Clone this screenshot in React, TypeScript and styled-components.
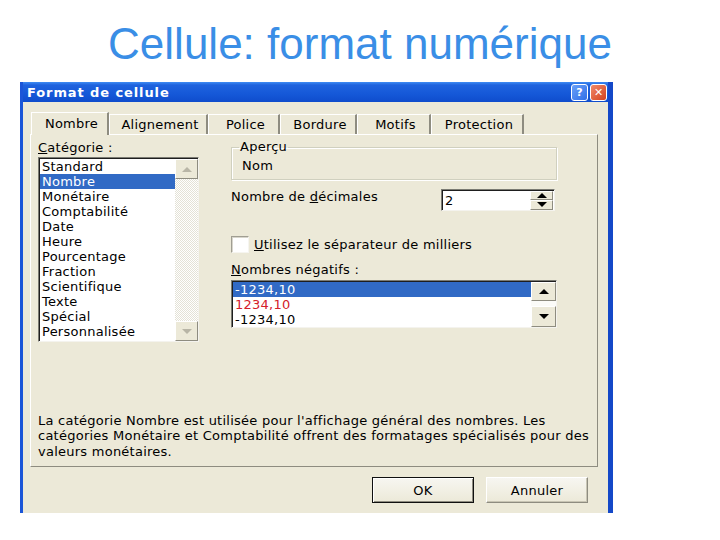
import React from 'react';
import styled, { createGlobalStyle, css } from 'styled-components';

const GlobalStyle = createGlobalStyle`
    html, body {
        margin: 0;
        padding: 0;
        background: #ffffff;
    }
    body {
        font-family: 'DejaVu Sans', 'Liberation Sans', sans-serif;
        font-size: 13px;
        letter-spacing: 0.25px;
        color: #000;
    }
`;

const categories = [
    'Standard',
    'Nombre',
    'Monétaire',
    'Comptabilité',
    'Date',
    'Heure',
    'Pourcentage',
    'Fraction',
    'Scientifique',
    'Texte',
    'Spécial',
    'Personnalisée',
];

const negatives = [
    { label: '-1234,10', red: false },
    { label: '1234,10', red: true },
    { label: '-1234,10', red: false },
];

const tabs = [
    { label: 'Nombre', w: 78 },
    { label: 'Alignement', w: 99 },
    { label: 'Police', w: 72 },
    { label: 'Bordure', w: 77 },
    { label: 'Motifs', w: 74 },
    { label: 'Protection', w: 93 },
];

export default function App() {
    return (
        <>
            <GlobalStyle />
            <Page>
                <Heading>Cellule: format numérique</Heading>
                <Dialog>
                    <TitleBar>
                        <TitleText>Format de cellule</TitleText>
                        <TitleButtons>
                            <CaptionButton $kind="help">?</CaptionButton>
                            <CaptionButton $kind="close">✕</CaptionButton>
                        </TitleButtons>
                    </TitleBar>
                    <Client>
                        <TabRow>
                            {tabs.map((t, i) => (
                                <Tab key={t.label} $w={t.w} $active={i === 0}>
                                    {t.label}
                                </Tab>
                            ))}
                        </TabRow>
                        <Panel>
                            <Columns>
                                <Column>
                                    <Label>
                                        <u>C</u>atégorie :
                                    </Label>
                                    <CatList>
                                        <Items>
                                            {categories.map((c, i) => (
                                                <Item key={c} $selected={i === 1}>
                                                    {c}
                                                </Item>
                                            ))}
                                        </Items>
                                        <ScrollBar $width={23}>
                                            <ScrollButton $h={20}>
                                                <Arrow $dir="up" $disabled />
                                            </ScrollButton>
                                            <Track $checker />
                                            <ScrollButton $h={20}>
                                                <Arrow $dir="down" $disabled />
                                            </ScrollButton>
                                        </ScrollBar>
                                    </CatList>
                                </Column>
                                <Column>
                                    <GroupBox>
                                        <Legend>Aperçu</Legend>
                                        <Preview>Nom</Preview>
                                    </GroupBox>
                                    <DecimalRow>
                                        <Label>
                                            Nombre de <u>d</u>écimales
                                        </Label>
                                        <SpinBox>
                                            <SpinValue>2</SpinValue>
                                            <SpinButtons>
                                                <SpinButton>
                                                    <Arrow $dir="up" />
                                                </SpinButton>
                                                <SpinButton>
                                                    <Arrow $dir="down" />
                                                </SpinButton>
                                            </SpinButtons>
                                        </SpinBox>
                                    </DecimalRow>
                                    <CheckRow>
                                        <CheckBox />
                                        <Label>
                                            <u>U</u>tilisez le séparateur de milliers
                                        </Label>
                                    </CheckRow>
                                    <NegLabel>
                                        <u>N</u>ombres négatifs :
                                    </NegLabel>
                                    <NegList>
                                        <Items>
                                            {negatives.map((n, i) => (
                                                <Item key={i} $selected={i === 0} $red={n.red}>
                                                    {n.label}
                                                </Item>
                                            ))}
                                        </Items>
                                        <ScrollBar $width={25}>
                                            <ScrollButton $h={19}>
                                                <Arrow $dir="up" />
                                            </ScrollButton>
                                            <Track />
                                            <ScrollButton $h={21}>
                                                <Arrow $dir="down" />
                                            </ScrollButton>
                                        </ScrollBar>
                                    </NegList>
                                </Column>
                            </Columns>
                            <Description>
                                La catégorie Nombre est utilisée pour l'affichage général des nombres. Les
                                <br />
                                catégories Monétaire et Comptabilité offrent des formatages spécialisés pour des
                                <br />
                                valeurs monétaires.
                            </Description>
                        </Panel>
                        <ButtonRow>
                            <PushButton $default>OK</PushButton>
                            <PushButton>Annuler</PushButton>
                        </ButtonRow>
                    </Client>
                </Dialog>
            </Page>
        </>
    );
}

const Page = styled.div`
    width: 720px;
    height: 540px;
    overflow: hidden;
    background: #fff;
`;

const Heading = styled.h1`
    margin: 0;
    height: 82px;
    padding-top: 18px;
    box-sizing: border-box;
    text-align: center;
    font-family: 'Liberation Sans', Arial, sans-serif;
    font-weight: normal;
    font-size: 44px;
    letter-spacing: 0;
    line-height: 52px;
    color: #3a8ee6;
`;

const Dialog = styled.div`
    margin-left: 20px;
    width: 593px;
    height: 431px;
    box-sizing: border-box;
    border-left: 3px solid #1b56d8;
    border-right: 5px solid #1448c8;
    display: flex;
    flex-direction: column;
`;

const TitleBar = styled.div`
    height: 20px;
    display: flex;
    align-items: center;
    justify-content: space-between;
    padding: 0 1px 0 4px;
    background: linear-gradient(#3f8cf3 0, #1f63de 3px, #1558d8 12px, #0f4ccc 20px);
`;

const TitleText = styled.span`
    color: #fff;
    font-weight: bold;
    font-size: 13px;
    letter-spacing: 0.9px;
`;

const TitleButtons = styled.div`
    display: flex;
    gap: 2px;
`;

const CaptionButton = styled.div<{ $kind: 'help' | 'close' }>`
    width: 17px;
    height: 17px;
    box-sizing: border-box;
    border: 1px solid #fff;
    border-radius: 3px;
    display: flex;
    align-items: center;
    justify-content: center;
    color: #fff;
    font-weight: bold;
    font-size: 11px;
    letter-spacing: 0;
    line-height: 1;
    ${(p) =>
        p.$kind === 'help'
            ? css`
                  background: linear-gradient(135deg, #6aa1f8, #2f6ee8);
              `
            : css`
                  background: linear-gradient(135deg, #f08a6a, #d5421f);
              `}
`;

const Client = styled.div`
    flex: 1;
    background: #ece9d8;
    padding: 10px 10px 0 7px;
    display: flex;
    flex-direction: column;
`;

const TabRow = styled.div`
    display: flex;
    align-items: flex-end;
    height: 22px;
    padding-left: 1px;
    position: relative;
    z-index: 1;
`;

const Tab = styled.div<{ $w: number; $active?: boolean }>`
    width: ${(p) => p.$w}px;
    box-sizing: border-box;
    height: ${(p) => (p.$active ? 23 : 20)}px;
    margin-bottom: ${(p) => (p.$active ? -1 : 0)}px;
    padding: ${(p) => (p.$active ? '3px' : '2px')} 0 0 4px;
    text-align: center;
    background: #ece9d8;
    border-top: 1px solid #fff;
    border-left: 1px solid #fff;
    border-right: 2px solid #8e8c80;
    line-height: 16px;
`;

const Panel = styled.div`
    height: 333px;
    box-sizing: border-box;
    border: 1px solid;
    border-color: #fff #8e8c80 #8e8c80 #fff;
    padding: 5px 0 7px 7px;
    display: flex;
    flex-direction: column;
`;

const Columns = styled.div`
    display: grid;
    grid-template-columns: 161px 326px;
    column-gap: 32px;
`;

const Column = styled.div`
    display: flex;
    flex-direction: column;
`;

const Label = styled.span`
    line-height: 15px;
    white-space: nowrap;
`;

const sunken = css`
    box-sizing: border-box;
    background: #fff;
    border: 1px solid;
    border-color: #7b7b73 #f4f3ee #f4f3ee #7b7b73;
    box-shadow: inset 1px 1px 0 #1e1e1e;
`;

const CatList = styled.div`
    ${sunken};
    margin-top: 2px;
    width: 161px;
    height: 185px;
    display: flex;
    padding: 1px 0 0 1px;
`;

const Items = styled.div`
    flex: 1;
    display: flex;
    flex-direction: column;
`;

const Item = styled.div<{ $selected?: boolean; $red?: boolean }>`
    height: 15px;
    line-height: 16px;
    padding-left: 2px;
    white-space: nowrap;
    color: ${(p) => (p.$selected ? '#fff' : p.$red ? '#d4202a' : '#000')};
    background: ${(p) => (p.$selected ? '#316ac5' : 'transparent')};
`;

const ScrollBar = styled.div<{ $width: number }>`
    width: ${(p) => p.$width}px;
    display: flex;
    flex-direction: column;
`;

const ScrollButton = styled.div<{ $h: number }>`
    height: ${(p) => p.$h}px;
    box-sizing: border-box;
    background: #ece9d8;
    border: 1px solid;
    border-color: #fff #8e8c80 #8e8c80 #fff;
    display: flex;
    align-items: center;
    justify-content: center;
`;

const Track = styled.div<{ $checker?: boolean }>`
    flex: 1;
    background-color: #fbfbf8;
    ${(p) =>
        p.$checker &&
        css`
            background-image: repeating-conic-gradient(#ffffff 0 25%, #e4e2d6 0 50%);
            background-size: 2px 2px;
        `}
`;

const Arrow = styled.span<{ $dir: 'up' | 'down'; $disabled?: boolean }>`
    width: 0;
    height: 0;
    border-left: 5px solid transparent;
    border-right: 5px solid transparent;
    ${(p) =>
        p.$dir === 'up'
            ? css`
                  border-bottom: 5px solid ${p.$disabled ? '#b8b5a6' : '#000'};
              `
            : css`
                  border-top: 5px solid ${p.$disabled ? '#b8b5a6' : '#000'};
              `}
`;

const GroupBox = styled.fieldset`
    margin: 0;
    padding: 0 10px 5px 10px;
    border: 1px solid #d0d0bf;
    box-shadow: inset 1px 1px 0 #fff, 1px 1px 0 #fff;
    border-radius: 0;
    height: 40px;
    box-sizing: border-box;
`;

const Legend = styled.legend`
    padding: 0 1px;
    margin-left: -3px;
    line-height: 14px;
`;

const Preview = styled.div`
    margin-top: 4px;
    line-height: 15px;
`;

const DecimalRow = styled.div`
    display: flex;
    align-items: flex-start;
    margin-top: 9px;
`;

const SpinBox = styled.div`
    ${sunken};
    margin-left: auto;
    margin-right: 2px;
    width: 114px;
    height: 22px;
    display: flex;
    align-items: center;
    padding: 1px 1px 1px 3px;
`;

const SpinValue = styled.span`
    flex: 1;
    line-height: 16px;
    padding-top: 2px;
`;

const SpinButtons = styled.div`
    width: 23px;
    height: 19px;
    display: flex;
    flex-direction: column;
`;

const SpinButton = styled.div`
    flex: 1;
    box-sizing: border-box;
    background: #ece9d8;
    border: 1px solid;
    border-color: #fff #8e8c80 #8e8c80 #fff;
    display: flex;
    align-items: center;
    justify-content: center;
`;

const CheckRow = styled.div`
    display: flex;
    align-items: center;
    gap: 5px;
    margin-top: 25px;
`;

const CheckBox = styled.span`
    width: 18px;
    height: 17px;
    box-sizing: border-box;
    background: #fff;
    border: 1px solid;
    border-color: #a09e92 #f6f5f0 #f6f5f0 #a09e92;
    box-shadow: inset 1px 1px 0 #d8d6cc;
`;

const NegLabel = styled(Label)`
    margin-top: 9px;
`;

const NegList = styled.div`
    ${sunken};
    margin-top: 3px;
    width: 326px;
    height: 48px;
    display: flex;
    padding: 1px 0 0 1px;
`;

const Description = styled.p`
    margin: auto 0 0 0;
    line-height: 15.5px;
    white-space: nowrap;
`;

const ButtonRow = styled.div`
    display: flex;
    justify-content: flex-end;
    gap: 12px;
    margin-top: 10px;
    padding-right: 10px;
`;

const PushButton = styled.button<{ $default?: boolean }>`
    width: 102px;
    height: 26px;
    font-family: inherit;
    font-size: 13px;
    letter-spacing: 0.25px;
    color: #000;
    background: linear-gradient(#f7f6f1, #ece9d8);
    border: 1px solid;
    ${(p) =>
        p.$default
            ? css`
                  border-color: #101010;
                  box-shadow: inset 1px 1px 0 #fff, inset -1px -1px 0 #8e8c80;
              `
            : css`
                  border-color: #fff #8e8c80 #8e8c80 #fff;
                  box-shadow: inset -1px -1px 0 #c8c5b4;
              `}
`;
